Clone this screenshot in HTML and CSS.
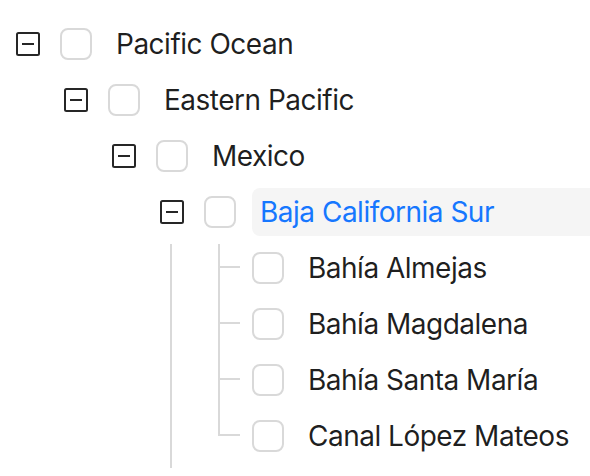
FILE: index.html
```html
<!DOCTYPE html>
<html>
<head>
<meta charset="utf-8">
<link rel="stylesheet" href="styles.css">
</head>
<body>
<div class="tree">
  <div class="node">
    <span class="switcher"><svg class="minus" viewBox="0 0 24 24"><rect x="1" y="1" width="22" height="22" rx="1.5"/><line x1="6" y1="12" x2="18" y2="12"/></svg></span>
    <span class="checkbox"></span>
    <span class="title">Pacific Ocean</span>
  </div>
  <div class="node">
    <span class="indent"></span>
    <span class="switcher"><svg class="minus" viewBox="0 0 24 24"><rect x="1" y="1" width="22" height="22" rx="1.5"/><line x1="6" y1="12" x2="18" y2="12"/></svg></span>
    <span class="checkbox"></span>
    <span class="title">Eastern Pacific</span>
  </div>
  <div class="node">
    <span class="indent"></span><span class="indent"></span>
    <span class="switcher"><svg class="minus" viewBox="0 0 24 24"><rect x="1" y="1" width="22" height="22" rx="1.5"/><line x1="6" y1="12" x2="18" y2="12"/></svg></span>
    <span class="checkbox"></span>
    <span class="title">Mexico</span>
  </div>
  <div class="node">
    <span class="indent"></span><span class="indent"></span><span class="indent"></span>
    <span class="switcher"><svg class="minus" viewBox="0 0 24 24"><rect x="1" y="1" width="22" height="22" rx="1.5"/><line x1="6" y1="12" x2="18" y2="12"/></svg></span>
    <span class="checkbox"></span>
    <span class="title selected">Baja California Sur</span>
  </div>
  <div class="node">
    <span class="indent"></span><span class="indent"></span><span class="indent"></span><span class="indent line"></span>
    <span class="switcher leaf"></span>
    <span class="checkbox"></span>
    <span class="title">Bahía Almejas</span>
  </div>
  <div class="node">
    <span class="indent"></span><span class="indent"></span><span class="indent"></span><span class="indent line"></span>
    <span class="switcher leaf"></span>
    <span class="checkbox"></span>
    <span class="title">Bahía Magdalena</span>
  </div>
  <div class="node">
    <span class="indent"></span><span class="indent"></span><span class="indent"></span><span class="indent line"></span>
    <span class="switcher leaf"></span>
    <span class="checkbox"></span>
    <span class="title">Bahía Santa María</span>
  </div>
  <div class="node">
    <span class="indent"></span><span class="indent"></span><span class="indent"></span><span class="indent line"></span>
    <span class="switcher leaf last"></span>
    <span class="checkbox"></span>
    <span class="title">Canal López Mateos</span>
  </div>
</div>
</body>
</html>
```
FILE: styles.css
```css
html, body {
  margin: 0;
  background: #ffffff;
  overflow: hidden;
}
body {
  font-family: Inter, "Noto Sans", sans-serif;
  font-size: 28px;
  letter-spacing: -0.5px;
  color: rgba(0, 0, 0, 0.88);
}
.tree {
  padding: 20px 0 0 4px;
}
.node {
  display: flex;
  align-items: center;
  padding-bottom: 8px;
}
.indent {
  position: relative;
  flex: none;
  width: 48px;
  height: 48px;
}
.indent.line::before {
  content: "";
  position: absolute;
  top: 0;
  bottom: -8px;
  right: 24px;
  width: 2px;
  background: #d9d9d9;
}
.switcher {
  position: relative;
  flex: none;
  width: 48px;
  height: 48px;
  display: flex;
  align-items: center;
  justify-content: center;
}
.minus {
  width: 24px;
  height: 24px;
  fill: none;
  stroke: rgba(0, 0, 0, 0.85);
  stroke-width: 2;
}
.switcher.leaf::before {
  content: "";
  position: absolute;
  top: 0;
  bottom: -8px;
  right: 24px;
  width: 2px;
  background: #d9d9d9;
}
.switcher.leaf.last::before {
  bottom: auto;
  height: 24px;
}
.switcher.leaf::after {
  content: "";
  position: absolute;
  top: 22px;
  left: 24px;
  width: 20px;
  height: 2px;
  background: #d9d9d9;
}
.checkbox {
  flex: none;
  box-sizing: border-box;
  width: 32px;
  height: 32px;
  border: 2px solid #d9d9d9;
  border-radius: 8px;
  margin: 0 16px 0 8px;
  background: #fff;
}
.title {
  flex: 1;
  min-width: 0;
  padding: 0 8px;
  line-height: 48px;
  height: 48px;
  border-radius: 8px 0 0 8px;
  white-space: nowrap;
}
.title.selected {
  background: #f5f5f5;
  color: #1677ff;
}
```
